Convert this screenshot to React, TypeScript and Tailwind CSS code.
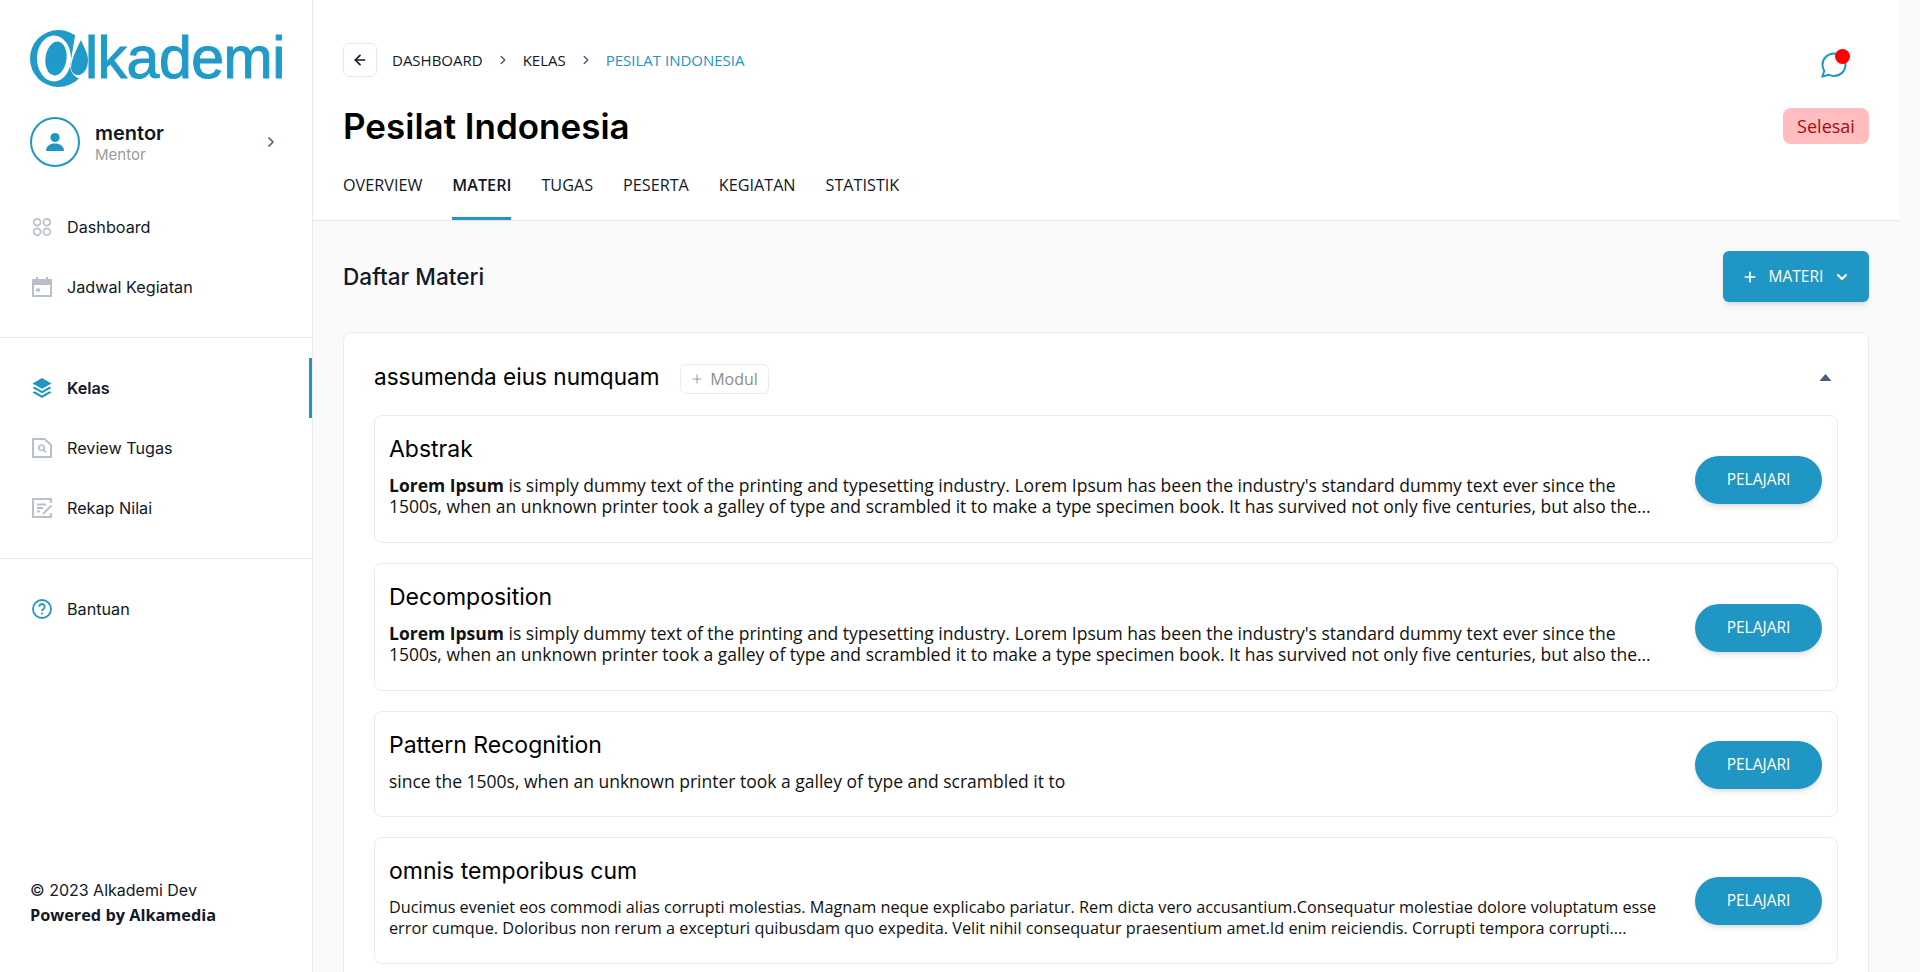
import React from 'react';
import { ArrowLeft, ChevronDown, ChevronRight, Plus } from 'lucide-react';

const LOREM_LINES = "is simply dummy text of the printing and typesetting industry. Lorem Ipsum has been the industry's standard dummy text ever since the 1500s, when an unknown printer took a galley of type and scrambled it to make a type specimen book. It has survived not only five centuries, but also the leap into electronic typesetting, remaining essentially unchanged.";

const modules = [
  { title: 'Abstrak', lorem: true, text: LOREM_LINES, h: 'h-[128px]', size: 'text-[17.500px]' },
  { title: 'Decomposition', lorem: true, text: LOREM_LINES, h: 'h-[128px]', size: 'text-[17.500px]' },
  { title: 'Pattern Recognition', lorem: false, text: 'since the 1500s, when an unknown printer took a galley of type and scrambled it to', h: 'h-[106px]', size: 'text-[17.500px]' },
  {
    title: 'omnis temporibus cum',
    lorem: false,
    text: 'Ducimus eveniet eos commodi alias corrupti molestias. Magnam neque explicabo pariatur. Rem dicta vero accusantium.Consequatur molestiae dolore voluptatum esse error cumque. Doloribus non rerum a excepturi quibusdam quo expedita. Velit nihil consequatur praesentium amet.Id enim reiciendis. Corrupti tempora corrupti....',
    h: 'h-[127px]',
    size: 'text-[16.250px]',
  },
];

const GridIcon = () => (
  <svg viewBox="0 0 20 20" className="w-[20px] h-[20px]" fill="none" stroke="#b8c0ca" strokeWidth="1.700">
    <circle cx="5.200" cy="5.200" r="3.400" />
    <circle cx="14.800" cy="5.200" r="3.400" />
    <circle cx="5.200" cy="14.800" r="3.400" />
    <circle cx="14.800" cy="14.800" r="3.400" />
  </svg>
);

const CalendarIcon = () => (
  <svg viewBox="0 0 20 20" className="w-[20px] h-[20px]" fill="#b8c0ca">
    <path d="M4 0h2v2h8V0h2v2h3a1 1 0 0 1 1 1v16a1 1 0 0 1-1 1H1a1 1 0 0 1-1-1V3a1 1 0 0 1 1-1h3V0zM2 8v10h16V8H2z" />
    <rect x="4" y="11.500" width="4" height="3" />
  </svg>
);

const LayersIcon = () => (
  <svg viewBox="0 0 20 20" className="w-[20px] h-[20px]" fill="#2096c5">
    <path d="M10 0l9.500 5.400L10 10.800.5 5.400 10 0z" />
    <path d="M2.600 8.700L.5 9.900 10 15.300l9.500-5.400-2.100-1.200-7.400 4.200-7.400-4.200z" />
    <path d="M2.600 13.200L.5 14.400 10 20l9.500-5.600-2.100-1.200-7.400 4.300-7.400-4.300z" />
  </svg>
);

const ReviewIcon = () => (
  <svg viewBox="0 0 20 20" className="w-[20px] h-[20px]" fill="none" stroke="#b8c0ca">
    <path d="M1 1h11.500L19 7v12H1V1z" strokeWidth="2" />
    <circle cx="9.500" cy="9.800" r="2.700" strokeWidth="1.700" />
    <path d="M11.500 11.800l2.600 2.600" strokeWidth="1.800" />
  </svg>
);

const NilaiIcon = () => (
  <svg viewBox="0 0 20 20" className="w-[20px] h-[20px]" fill="none" stroke="#b8c0ca">
    <path d="M19 5V1H1v18h18v-4" strokeWidth="2" />
    <path d="M5 6.500h9M5 10h6M5 13.500h3" strokeWidth="1.800" />
    <path d="M11 16l8.500-8.500" strokeWidth="2" />
  </svg>
);

const HelpIcon = () => (
  <svg viewBox="0 0 20 20" className="w-[20px] h-[20px]" fill="none" stroke="#2096c5">
    <circle cx="10" cy="10" r="9" strokeWidth="1.800" />
    <path d="M7.300 7.800a2.700 2.700 0 1 1 4.200 2.200c-1 .6-1.500 1-1.500 1.900" strokeWidth="1.800" />
    <circle cx="10" cy="14.600" r="1" fill="#2096c5" stroke="none" />
  </svg>
);

const LogoMark = () => (
  <svg viewBox="0 0 58 58" className="w-[58px] h-[58px] shrink-0">
    <circle cx="28.500" cy="28.500" r="28.500" fill="#1f9ac9" />
    <ellipse cx="24" cy="28.500" rx="17" ry="23" fill="#fff" />
    <path d="M46 0H60V46L50 49Q41 46 40 36Z" fill="#fff" />
    <ellipse cx="26" cy="28.500" rx="10.500" ry="17" transform="rotate(8 26 28.500)" fill="#1f9ac9" />
    <path d="M51 10C54 18 58 23 58 30C58 39 53 45 48 45C43 45 41 41 41 37C42 28 47 18 51 10Z" fill="#1f9ac9" />
  </svg>
);

const NavItem = ({ icon, label, active }: { icon: React.ReactNode; label: string; active?: boolean }) => (
  <div className="relative flex items-center h-[60px] pl-[32px] gap-[15px]">
    {icon}
    <span className={`text-[16.200px] text-[#111827] ${active ? 'font-semibold' : 'font-normal'}`}>{label}</span>
    {active && <div className="absolute right-0 top-0 h-[60px] w-[3px] bg-[#2096c5]" />}
  </div>
);

const Sidebar = () => (
  <aside className="w-[313px] h-full shrink-0 bg-white border-r border-[#e5e7eb] flex flex-col font-['Inter',sans-serif]">
    <div className="flex items-center pl-[30px] pt-[30px] h-[87px]">
      <LogoMark />
      <span className="text-[59px] leading-none text-[#1f9ac9] tracking-[-0.5px] font-['Liberation_Sans',sans-serif] [-webkit-text-stroke:1px_#1f9ac9] -ml-[3px]">lkademi</span>
    </div>
    <div className="flex items-center pl-[30px] pr-[33px] mt-[30px]">
      <div className="w-[50px] h-[50px] rounded-full border-2 border-[#2096c5] flex items-center justify-center">
        <svg viewBox="0 0 20 20" className="w-[20px] h-[20px]" fill="#2096c5">
          <circle cx="10" cy="5.500" r="4.600" />
          <path d="M1 19c0-5 4-7.500 9-7.500s9 2.500 9 7.500H1z" />
        </svg>
      </div>
      <div className="ml-[15px] flex-1 pt-[1px]">
        <div className="text-[20px] leading-[24px] font-semibold text-[#111827]">mentor</div>
        <div className="text-[15px] leading-[20px] text-[#9b9b9b]">Mentor</div>
      </div>
      <ChevronRight className="w-[16px] h-[16px] text-[#4d5a80]" strokeWidth={2.5} />
    </div>
    <div className="mt-[30px] pb-[20px] border-b border-[#e5e7eb]">
      <NavItem icon={<GridIcon />} label="Dashboard" />
      <NavItem icon={<CalendarIcon />} label="Jadwal Kegiatan" />
    </div>
    <div className="pt-[20px] pb-[20px] border-b border-[#e5e7eb]">
      <NavItem icon={<LayersIcon />} label="Kelas" active />
      <NavItem icon={<ReviewIcon />} label="Review Tugas" />
      <NavItem icon={<NilaiIcon />} label="Rekap Nilai" />
    </div>
    <div className="pt-[20px]">
      <NavItem icon={<HelpIcon />} label="Bantuan" />
    </div>
    <div className="mt-auto pl-[30px] pb-[45px]">
      <div className="text-[16px] leading-[25px] text-[#111827]">© 2023 Alkademi Dev</div>
      <div className="text-[16.300px] leading-[24px] font-bold text-[#111827] font-['Open_Sans',sans-serif]">Powered by Alkamedia</div>
    </div>
  </aside>
);

const tabs = ['OVERVIEW', 'MATERI', 'TUGAS', 'PESERTA', 'KEGIATAN', 'STATISTIK'];

const Header = () => (
  <header className="h-[221px] mr-[21px] bg-white border-b border-[#e5e7eb] pl-[30px] pr-[30px] flex flex-col shrink-0">
    <div className="flex items-center justify-between pt-[42px]">
      <div className="flex items-center font-['Open_Sans',sans-serif] text-[15px] text-[#111827]">
        <button className="w-[34px] h-[34px] rounded-[6px] border border-[#e5e7eb] flex items-center justify-center mr-[15px]">
          <ArrowLeft className="w-[16px] h-[16px] text-[#111827]" strokeWidth={2.5} />
        </button>
        <span>DASHBOARD</span>
        <ChevronRight className="w-[14px] h-[14px] text-[#4d5a80] mx-[13px]" strokeWidth={2.5} />
        <span>KELAS</span>
        <ChevronRight className="w-[14px] h-[14px] text-[#4d5a80] mx-[13px]" strokeWidth={2.5} />
        <span className="text-[#2096c5]">PESILAT INDONESIA</span>
      </div>
      <div className="relative w-[26px] h-[26px] mr-[22px] mt-[10px]">
        <svg viewBox="0 0 26 26" className="w-[26px] h-[26px]" fill="none" stroke="#2096c5" strokeWidth="2">
          <path d="M13 1.500c6.300 0 11.500 5 11.500 11.300S19.300 24 13 24c-2 0-3.700-.5-5.200-1.300L1.500 24.500l1.700-5.700C2.100 17 1.500 15 1.500 12.800 1.500 6.500 6.700 1.500 13 1.500z" />
        </svg>
        <div className="absolute -top-[3px] -right-[3px] w-[15px] h-[15px] rounded-full bg-[#ff0000]" />
      </div>
    </div>
    <div className="flex items-center justify-between mt-[26px]">
      <h1 className="text-[35px] leading-[44px] font-semibold text-black font-['Inter',sans-serif]">Pesilat Indonesia</h1>
      <span className="h-[36px] w-[86px] rounded-[8px] bg-[#ffbdc0] text-[#a30d11] text-[18px] flex items-center justify-center font-['Open_Sans',sans-serif]">Selesai</span>
    </div>
    <nav className="flex gap-[30px] mt-auto font-['Open_Sans',sans-serif] text-[16.200px] text-[#111827]">
      {tabs.map(tab => (
        <div
          key={tab}
          className={`h-[54px] pb-[12px] flex items-center border-b-[3px] ${tab === 'MATERI' ? 'font-semibold border-[#2096c5]' : 'border-transparent'}`}
        >
          {tab}
        </div>
      ))}
    </nav>
  </header>
);

const ModuleRow = ({ title, lorem, text, h, size }: (typeof modules)[number]) => (
  <div className={`${h} mb-5 shrink-0 rounded-[8px] border border-[#ebebeb] bg-white pl-[14px] pr-[15px] flex items-center`}>
    <div className="flex-1 min-w-0 pr-[28px] -mt-[8px]">
      <h3 className="text-[23px] leading-[32px] font-normal text-black font-['Inter',sans-serif] mb-[10px]">{title}</h3>
      <p className={`${size} leading-[21px] text-[#111] line-clamp-2 font-['Open_Sans',sans-serif]`}>
        {lorem && <b className="font-bold">Lorem Ipsum </b>}
        {text}
      </p>
    </div>
    <button className="w-[127px] h-[48px] mt-[1px] shrink-0 rounded-full bg-[#2096c5] text-white text-[15.500px] shadow-md font-['Open_Sans',sans-serif]">PELAJARI</button>
  </div>
);

const App: React.FC = () => {
  return (
    <div className="w-full h-screen flex overflow-hidden bg-[#fafafa]">
      <Sidebar />
      <main className="flex-1 min-w-0 flex flex-col">
        <Header />
        <div className="pl-[30px] pr-[51px] flex-1 min-h-0">
          <div className="flex items-center justify-between h-[111px]">
            <h2 className="text-[22.600px] font-medium text-[#111827] font-['Inter',sans-serif]">Daftar Materi</h2>
            <button className="w-[146px] h-[51px] rounded-[6px] bg-[#2096c5] text-white text-[15.500px] flex items-center justify-center gap-[11px] shadow-md font-['Open_Sans',sans-serif]">
              <Plus className="w-[16px] h-[16px]" strokeWidth={2.5} />
              <span>MATERI</span>
              <ChevronDown className="w-[16px] h-[16px]" strokeWidth={3} />
            </button>
          </div>
          <section className="rounded-[8px] border border-[#ebebeb] bg-white pl-[30px] pr-[30px] pt-[28px] h-[700px]">
            <div className="flex items-center h-[54px]">
              <span className="text-[22.600px] text-black font-['Inter',sans-serif] -mt-[23px]">assumenda eius numquam</span>
              <button className="ml-[20px] -mt-[19px] w-[89px] h-[30px] rounded-[6px] border border-[#ebebeb] flex items-center justify-center gap-[6px] text-[#8c8c8c] text-[16px] font-['Open_Sans',sans-serif]">
                <Plus className="w-[14px] h-[14px]" strokeWidth={1.5} />
                Modul
              </button>
              <svg viewBox="0 0 12 7" className="ml-auto mr-[6px] -mt-[21px] w-[13px] h-[7px]" fill="#4d5a80">
                <path d="M6 0l6 7H0z" />
              </svg>
            </div>
            <div className="flex flex-col">
              {modules.map(m => (
                <ModuleRow key={m.title} {...m} />
              ))}
            </div>
          </section>
        </div>
      </main>
    </div>
  );
};

export default App;
